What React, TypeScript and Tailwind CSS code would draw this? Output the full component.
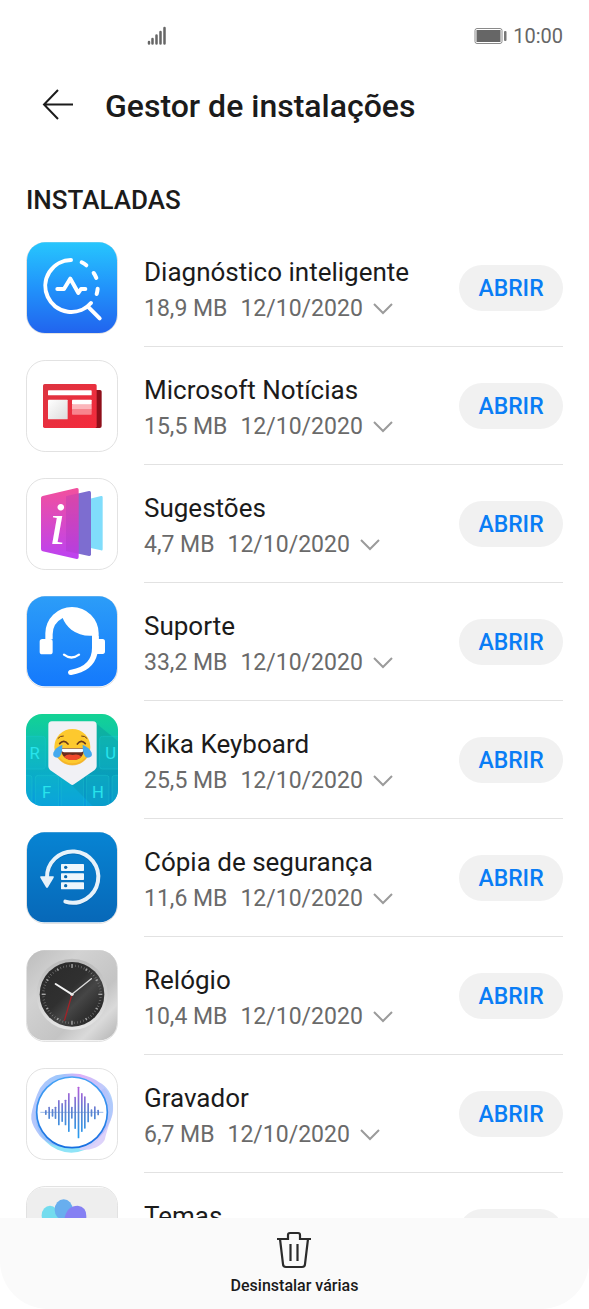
import { useState } from "react"

interface InstalledApp {
  id: string
  name: string
  size: string
  date: string
  icon: () => React.ReactNode
}

const AppIcon = ({ children }: { children: React.ReactNode }) => (
  <svg viewBox="30 30 276 276" className="h-[92px] w-[92px] shrink-0" aria-hidden="true">
    <rect x="31.5" y="31.5" width="273" height="273" rx="56" fill="#fff" stroke="#e2e2e2" strokeWidth="3" />
    {children}
  </svg>
)

const DiagnosticIcon = () => (
  <AppIcon>
    <defs>
      <linearGradient id="diag" x1="0" y1="0" x2="0" y2="1">
        <stop offset="0" stopColor="#27c6fd" />
        <stop offset="0.5" stopColor="#2193fb" />
        <stop offset="1" stopColor="#2164ee" />
      </linearGradient>
    </defs>
    <rect x="33" y="31" width="270" height="272" rx="54" fill="url(#diag)" />
    <g fill="none" stroke="#fff" strokeWidth="12" strokeLinecap="round" strokeLinejoin="round">
      <path d="M165 84A78 78 0 1 0 225 213" />
      <path d="M197 91Q205 95 211 100" />
      <path d="M233 123Q238 130 241 138" />
      <path d="M245 170Q244 179 242 186" />
      <path d="M218 226L251 259" />
      <path d="M124 171H144L163 140L187 183L195 171H208" />
    </g>
  </AppIcon>
)

const NewsIcon = () => (
  <AppIcon>
    <defs>
      <linearGradient id="newsPage" x1="0" y1="0" x2="1" y2="1">
        <stop offset="0" stopColor="#dc3440" />
        <stop offset="1" stopColor="#f52a3c" />
      </linearGradient>
      <linearGradient id="newsPhoto" x1="0" y1="0" x2="1" y2="1">
        <stop offset="0" stopColor="#fff" />
        <stop offset="1" stopColor="#dcdcdc" />
      </linearGradient>
    </defs>
    <path d="M236 120H252Q257 120 257 125V228Q257 234 251 234H236Z" fill="#8f0f1a" />
    <rect x="81" y="102" width="161" height="132" rx="5" fill="url(#newsPage)" />
    <rect x="96" y="121" width="131" height="15" rx="2" fill="#fff" />
    <rect x="96" y="149" width="59" height="59" rx="2" fill="url(#newsPhoto)" />
    <rect x="168" y="149" width="59" height="15" rx="2" fill="#fff" />
    <rect x="168" y="164" width="59" height="15" fill="#fcb6bb" />
    <rect x="168" y="179" width="59" height="15" rx="2" fill="#f8848d" />
  </AppIcon>
)

const TipsIcon = () => (
  <AppIcon>
    <defs>
      <linearGradient id="tips" x1="0" y1="0" x2="0" y2="1">
        <stop offset="0" stopColor="#f2509d" />
        <stop offset="1" stopColor="#bc42f2" />
      </linearGradient>
    </defs>
    <path d="M186 101L255 84Q260 83 260 88V243Q260 249 255 247L186 232Z" fill="#80ddfb" />
    <path d="M150 85L219 69Q225 68 225 74V259Q225 265 219 264L150 249Z" fill="#7d6dd0" />
    <path d="M80 84L182 60Q188 59 188 65V267Q188 274 182 273L80 250Q75 249 75 243V90Q75 85 80 84Z" fill="url(#tips)" />
    <path d="M150 85L188 76V257L150 249Z" fill="#9b2fb8" opacity="0.25" />
    <text x="124" y="227" fill="#fff" fontFamily="'Liberation Serif', serif" fontStyle="italic" fontSize="186" textAnchor="middle">
      i
    </text>
  </AppIcon>
)

const SupportIcon = () => (
  <AppIcon>
    <defs>
      <linearGradient id="support" x1="0" y1="0" x2="0" y2="1">
        <stop offset="0" stopColor="#2c9df8" />
        <stop offset="1" stopColor="#1479fc" />
      </linearGradient>
    </defs>
    <rect x="33" y="31" width="270" height="270" rx="54" fill="url(#support)" />
    <path
      d="M88 160V142A80 79 0 0 1 248 142V160H228V149Q193 151 166 131Q148 117 140 96Q110 112 110 145V160Z"
      fill="#fff"
    />
    <rect x="71" y="159" width="39" height="46" rx="8" fill="#fff" />
    <path d="M228 150H248V159H260Q267 159 267 167V196Q267 204 260 204H244Q232 256 166 267Q157 268 156 260Q156 252 165 251Q228 240 228 186Z" fill="#fff" />
    <path d="M144 206Q166 223 189 206" fill="none" stroke="#fff" strokeWidth="7" strokeLinecap="round" />
  </AppIcon>
)

const KikaIcon = () => (
  <AppIcon>
    <defs>
      <linearGradient id="kika" x1="0" y1="0" x2="0" y2="1">
        <stop offset="0" stopColor="#13d394" />
        <stop offset="0.5" stopColor="#0cb5bd" />
        <stop offset="1" stopColor="#079adf" />
      </linearGradient>
      <clipPath id="kikaClip">
        <rect x="30" y="30" width="276" height="276" rx="48" />
      </clipPath>
    </defs>
    <g clipPath="url(#kikaClip)">
      <rect x="30" y="30" width="276" height="276" fill="url(#kika)" />
      <path d="M239 57L306 112V306H230L168 244Z" fill="#067f9c" opacity="0.3" />
      <g fill="#13bfd0" fillOpacity="0.25" stroke="#20c9d2" strokeOpacity="0.55" strokeWidth="2">
        <rect x="16" y="97" width="72" height="98" rx="8" />
        <rect x="251" y="97" width="72" height="98" rx="8" />
        <rect x="-22" y="214" width="70" height="104" rx="8" />
        <rect x="58" y="214" width="70" height="104" rx="8" />
        <rect x="135" y="214" width="68" height="104" rx="8" />
        <rect x="211" y="214" width="68" height="104" rx="8" />
        <rect x="288" y="214" width="68" height="104" rx="8" />
      </g>
      <g fill="#28e4ec" fontFamily="Roboto, sans-serif" fontSize="50" textAnchor="middle">
        <text x="56" y="166">R</text>
        <text x="284" y="166">U</text>
        <text x="92" y="282">F</text>
        <text x="246" y="282">H</text>
      </g>
      <path d="M108 52H231Q242 52 242 63V187Q242 194 236 198L174 241Q169 245 164 241L102 198Q97 194 97 187V63Q97 52 108 52Z" fill="#f1f1f5" />
      <circle cx="169" cy="129" r="54" fill="#fdc92e" />
      <path d="M117 145A54 54 0 0 0 221 145Q200 178 169 178Q138 178 117 145Z" fill="#f0a823" opacity="0.6" />
      <path d="M134 133H205Q203 168 170 168Q137 168 134 133Z" fill="#6a2d1e" />
      <path d="M137 134H202V139Q202 145 196 145H144Q138 145 137 139Z" fill="#fff" />
      <path d="M144 158Q155 148 170 153Q186 148 196 158Q186 168 170 168Q154 168 144 158Z" fill="#f04a2c" />
      <g fill="none" stroke="#6a3b1b" strokeWidth="5" strokeLinecap="round">
        <path d="M131 119Q143 105 156 120" />
        <path d="M184 120Q196 105 208 119" />
        <path d="M126 103Q132 95 142 96" strokeWidth="3" />
        <path d="M197 96Q207 95 213 103" strokeWidth="3" />
      </g>
      <path d="M139 122Q140 158 124 161Q109 160 112 146Q117 131 139 122Z" fill="#45a9ee" />
      <path d="M200 122Q199 158 215 161Q231 160 227 146Q221 131 200 122Z" fill="#45a9ee" />
    </g>
  </AppIcon>
)

const BackupIcon = () => (
  <AppIcon>
    <defs>
      <linearGradient id="backup" x1="0" y1="0" x2="0" y2="1">
        <stop offset="0" stopColor="#0784d3" />
        <stop offset="1" stopColor="#0768b8" />
      </linearGradient>
    </defs>
    <rect x="33" y="31" width="270" height="270" rx="52" fill="url(#backup)" />
    <path d="M93 171A77 77 0 1 1 148 242" fill="none" stroke="#075496" strokeWidth="12" strokeLinecap="round" opacity="0.35" />
    <path d="M93 168A77 77 0 1 1 148 239" fill="none" stroke="#e7f2fa" strokeWidth="12" strokeLinecap="round" />
    <path d="M75 163H111Q115 163 113 167L96 196Q93 200 90 196L73 167Q71 163 75 163Z" fill="#e7f2fa" />
    <rect x="135" y="126" width="69" height="21" rx="2" fill="#edf6fc" />
    <rect x="135" y="154" width="69" height="20" rx="2" fill="#edf6fc" />
    <rect x="135" y="181" width="69" height="21" rx="2" fill="#edf6fc" />
    <circle cx="149" cy="136" r="5" fill="#0868ae" />
    <circle cx="149" cy="164" r="5" fill="#0868ae" />
    <circle cx="149" cy="191" r="5" fill="#0868ae" />
  </AppIcon>
)

const ClockIcon = () => (
  <AppIcon>
    <defs>
      <linearGradient id="clockPlate" x1="0" y1="0" x2="1" y2="1">
        <stop offset="0" stopColor="#bdbdbd" />
        <stop offset="0.3" stopColor="#d2d2d2" />
        <stop offset="0.65" stopColor="#c4c4c4" />
        <stop offset="0.8" stopColor="#dadada" />
        <stop offset="1" stopColor="#b3b3b3" />
      </linearGradient>
      <linearGradient id="clockRim" x1="0" y1="0" x2="0" y2="1">
        <stop offset="0" stopColor="#b9b9b9" />
        <stop offset="1" stopColor="#e6e6e6" />
      </linearGradient>
      <linearGradient id="clockFace" x1="0" y1="0" x2="1" y2="1">
        <stop offset="0" stopColor="#2a2a2a" />
        <stop offset="0.45" stopColor="#303030" />
        <stop offset="0.6" stopColor="#464646" />
        <stop offset="0.75" stopColor="#333" />
        <stop offset="1" stopColor="#1c1c1c" />
      </linearGradient>
    </defs>
    <rect x="33" y="31" width="270" height="270" rx="52" fill="url(#clockPlate)" />
    <circle cx="168" cy="163" r="107" fill="url(#clockRim)" />
    <circle cx="168" cy="163" r="97" fill="url(#clockFace)" />
    <circle cx="168" cy="163" r="86" fill="none" stroke="#8a8a8a" strokeWidth="7" strokeDasharray="1.5 7.506" />
    <g stroke="#a5a5a5" strokeWidth="4">
      {Array.from({ length: 12 }, (_, hour) => (
        <path key={hour} d={hour % 3 === 0 ? "M168 72V84" : "M168 74V81"} transform={`rotate(${hour * 30} 168 163)`} />
      ))}
    </g>
    <path d="M168 163L119 132" stroke="#f4f4f4" strokeWidth="6" strokeLinecap="round" />
    <path d="M168 163L226 116" stroke="#dedede" strokeWidth="4" strokeLinecap="round" />
    <path d="M168 163L145 242" stroke="#a32228" strokeWidth="4" />
    <circle cx="168" cy="163" r="5" fill="#e8e8e8" />
  </AppIcon>
)

// x position, top and bottom of every bar of the wave
const waveBars = [
  [89, 156, 171], [99, 146, 183], [109, 153, 176], [118, 146, 183], [128, 126, 202],
  [138, 135, 192], [148, 125, 202], [158, 105, 222], [167, 146, 182], [177, 116, 213],
  [187, 86, 241], [197, 105, 222], [206, 115, 212], [216, 135, 193], [226, 154, 176],
  [236, 145, 184], [246, 155, 172],
]

const RecorderIcon = () => (
  <AppIcon>
    <defs>
      <linearGradient id="recRing" x1="0" y1="0" x2="0" y2="1">
        <stop offset="0" stopColor="#45a3f6" />
        <stop offset="1" stopColor="#176fe0" />
      </linearGradient>
      <linearGradient id="recWave" gradientUnits="userSpaceOnUse" x1="0" y1="86" x2="0" y2="241">
        <stop offset="0" stopColor="#b65bdc" />
        <stop offset="0.5" stopColor="#5a83cf" />
        <stop offset="1" stopColor="#249df2" />
      </linearGradient>
      <linearGradient id="recHalo" gradientUnits="userSpaceOnUse" x1="50" y1="160" x2="285" y2="140">
        <stop offset="0" stopColor="#a3b9fb" />
        <stop offset="0.4" stopColor="#86b9fb" />
        <stop offset="0.65" stopColor="#d79df6" />
        <stop offset="1" stopColor="#a4c8fc" />
      </linearGradient>
    </defs>
    <ellipse cx="166" cy="172" rx="108" ry="112" fill="#8fe4f7" />
    <path d="M266 90Q303 135 286 181Q272 219 266 246Q248 277 192 276L160 160Z" fill="#d9cdfa" opacity="0.9" />
    <path
      d="M46 170Q50 144 63 110Q79 66 120 52Q160 43 192 48Q229 57 248 72Q287 92 291 140Q292 174 278 198Q252 261 168 268Q92 270 63 222Q43 193 46 170Z"
      fill="url(#recHalo)"
      opacity="0.8"
    />
    <circle cx="168" cy="163" r="106" fill="#fff" stroke="url(#recRing)" strokeWidth="5" />
    <path d="M73 163H262" stroke="#6e9cde" strokeWidth="2" />
    <g fill="url(#recWave)">
      {waveBars.map(([x, top, bottom]) => (
        <rect key={x} x={x - 2} y={top} width="5" height={bottom - top} rx="2" />
      ))}
    </g>
  </AppIcon>
)

const ThemesIcon = () => (
  <AppIcon>
    <rect x="33" y="35" width="270" height="270" rx="48" fill="#eeeeee" />
    <ellipse cx="102" cy="118" rx="25" ry="29" fill="#73dcee" />
    <ellipse cx="143" cy="101" rx="27" ry="31" fill="#68aeee" />
    <path d="M143 142Q148 89 185 89Q211 92 211 120V152H143Z" fill="#8580f3" />
  </AppIcon>
)

const apps: InstalledApp[] = [
  { id: "diagnostico", name: "Diagnóstico inteligente", size: "18,9 MB", date: "12/10/2020", icon: DiagnosticIcon },
  { id: "noticias", name: "Microsoft Notícias", size: "15,5 MB", date: "12/10/2020", icon: NewsIcon },
  { id: "sugestoes", name: "Sugestões", size: "4,7 MB", date: "12/10/2020", icon: TipsIcon },
  { id: "suporte", name: "Suporte", size: "33,2 MB", date: "12/10/2020", icon: SupportIcon },
  { id: "kika", name: "Kika Keyboard", size: "25,5 MB", date: "12/10/2020", icon: KikaIcon },
  { id: "copia", name: "Cópia de segurança", size: "11,6 MB", date: "12/10/2020", icon: BackupIcon },
  { id: "relogio", name: "Relógio", size: "10,4 MB", date: "12/10/2020", icon: ClockIcon },
  { id: "gravador", name: "Gravador", size: "6,7 MB", date: "12/10/2020", icon: RecorderIcon },
  { id: "temas", name: "Temas", size: "9,1 MB", date: "12/10/2020", icon: ThemesIcon },
]

const StatusBar = () => (
  <div className="flex h-[72px] shrink-0 items-center justify-between pr-[26px] pl-[146px] text-[#666]">
    <svg width="21" height="20" viewBox="0 0 21 20" aria-hidden="true">
      <g stroke="currentColor" strokeWidth="2.5" strokeLinecap="round">
        <path d="M2 16V17.5M5.5 13V17.5M9.5 9.5V17.5M13.5 6V17.5M17.5 2V17.5" transform="translate(1 0)" />
      </g>
    </svg>
    <div className="flex items-center gap-[6px]">
      <svg width="34" height="18" viewBox="0 0 34 18" aria-hidden="true">
        <rect x="2" y="1.5" width="27" height="15" rx="2" fill="none" stroke="#8a8a8a" />
        <rect x="3.5" y="3" width="24" height="12" fill="#666" />
        <rect x="31" y="4" width="2.5" height="10" rx="1" fill="#777" />
      </svg>
      <span className="text-[20px] leading-6">10:00</span>
    </div>
  </div>
)

const AppRow = ({
  app,
  expanded,
  onToggle,
}: {
  app: InstalledApp
  expanded: boolean
  onToggle: () => void
}) => {
  const Icon = app.icon

  return (
    <li className="flex items-center gap-[26px]">
      <Icon />
      <div className="flex h-[118px] min-w-0 flex-1 items-center justify-between gap-4 border-b border-[#e2e2e2]">
        <div className="min-w-0 pt-[6px]">
          <h3 className="truncate text-[26px] leading-9 text-[#1b1b1b]">{app.name}</h3>
          <button
            type="button"
            aria-expanded={expanded}
            onClick={onToggle}
            className="flex items-center text-[23px] leading-[38px] text-[#6a6a6a]"
          >
            <span>{app.size}</span>
            <span className="ml-[13px]">{app.date}</span>
            <svg width="20" height="12" viewBox="0 0 20 12" className="ml-[10px]" aria-hidden="true">
              <path d="M1 1L10 10L19 1" fill="none" stroke="#9b9b9b" strokeWidth="2" />
            </svg>
          </button>
        </div>
        <button
          type="button"
          className="h-[46px] w-[104px] shrink-0 rounded-full bg-[#f1f1f1] pt-1 text-[23px] font-medium text-[#0a7df5]"
        >
          ABRIR
        </button>
      </div>
    </li>
  )
}

export default function App() {
  const [expandedId, setExpandedId] = useState("")

  return (
    <div className="flex h-screen flex-col bg-white font-[Roboto,sans-serif] text-[#1b1b1b]">
      <StatusBar />

      <header className="flex h-[66px] shrink-0 items-center gap-[31px] pl-[42px]">
        <button type="button" aria-label="Voltar">
          <svg width="32" height="32" viewBox="0 0 32 32" aria-hidden="true">
            <path d="M16 1L2 15.5L16 30M2 15.5H31" fill="none" stroke="#1b1b1b" strokeWidth="2" />
          </svg>
        </button>
        <h1 className="pt-[2px] text-[32px] leading-10 font-medium">Gestor de instalações</h1>
      </header>

      <main className="min-h-0 flex-1 overflow-y-auto px-[26px] [scrollbar-width:none]">
        <h2 className="pt-11 pb-[11px] text-[26px] leading-9 font-medium">INSTALADAS</h2>
        <ul>
          {apps.map((app) => (
            <AppRow
              key={app.id}
              app={app}
              expanded={expandedId === app.id}
              onToggle={() => setExpandedId((prev) => (prev === app.id ? "" : app.id))}
            />
          ))}
        </ul>
      </main>

      <footer className="flex shrink-0 justify-center rounded-b-[48px] bg-[#fafafa] pt-[13px] pb-3">
        <button type="button" className="flex flex-col items-center gap-[6px]">
          <svg width="36" height="38" viewBox="0 0 36 38" aria-hidden="true">
            <g fill="none" stroke="#2b2b2b" strokeWidth="2.2">
              <path d="M1 8H12V4Q12 2 14 2H22Q24 2 24 4V8H35" />
              <path d="M4 8L7 33Q7 36 10 36H26Q29 36 29 33L32 8" />
              <path d="M14.5 13V30M21.5 13V30" />
            </g>
          </svg>
          <span className="text-[16px] leading-[22px] font-medium">Desinstalar várias</span>
        </button>
      </footer>
    </div>
  )
}
